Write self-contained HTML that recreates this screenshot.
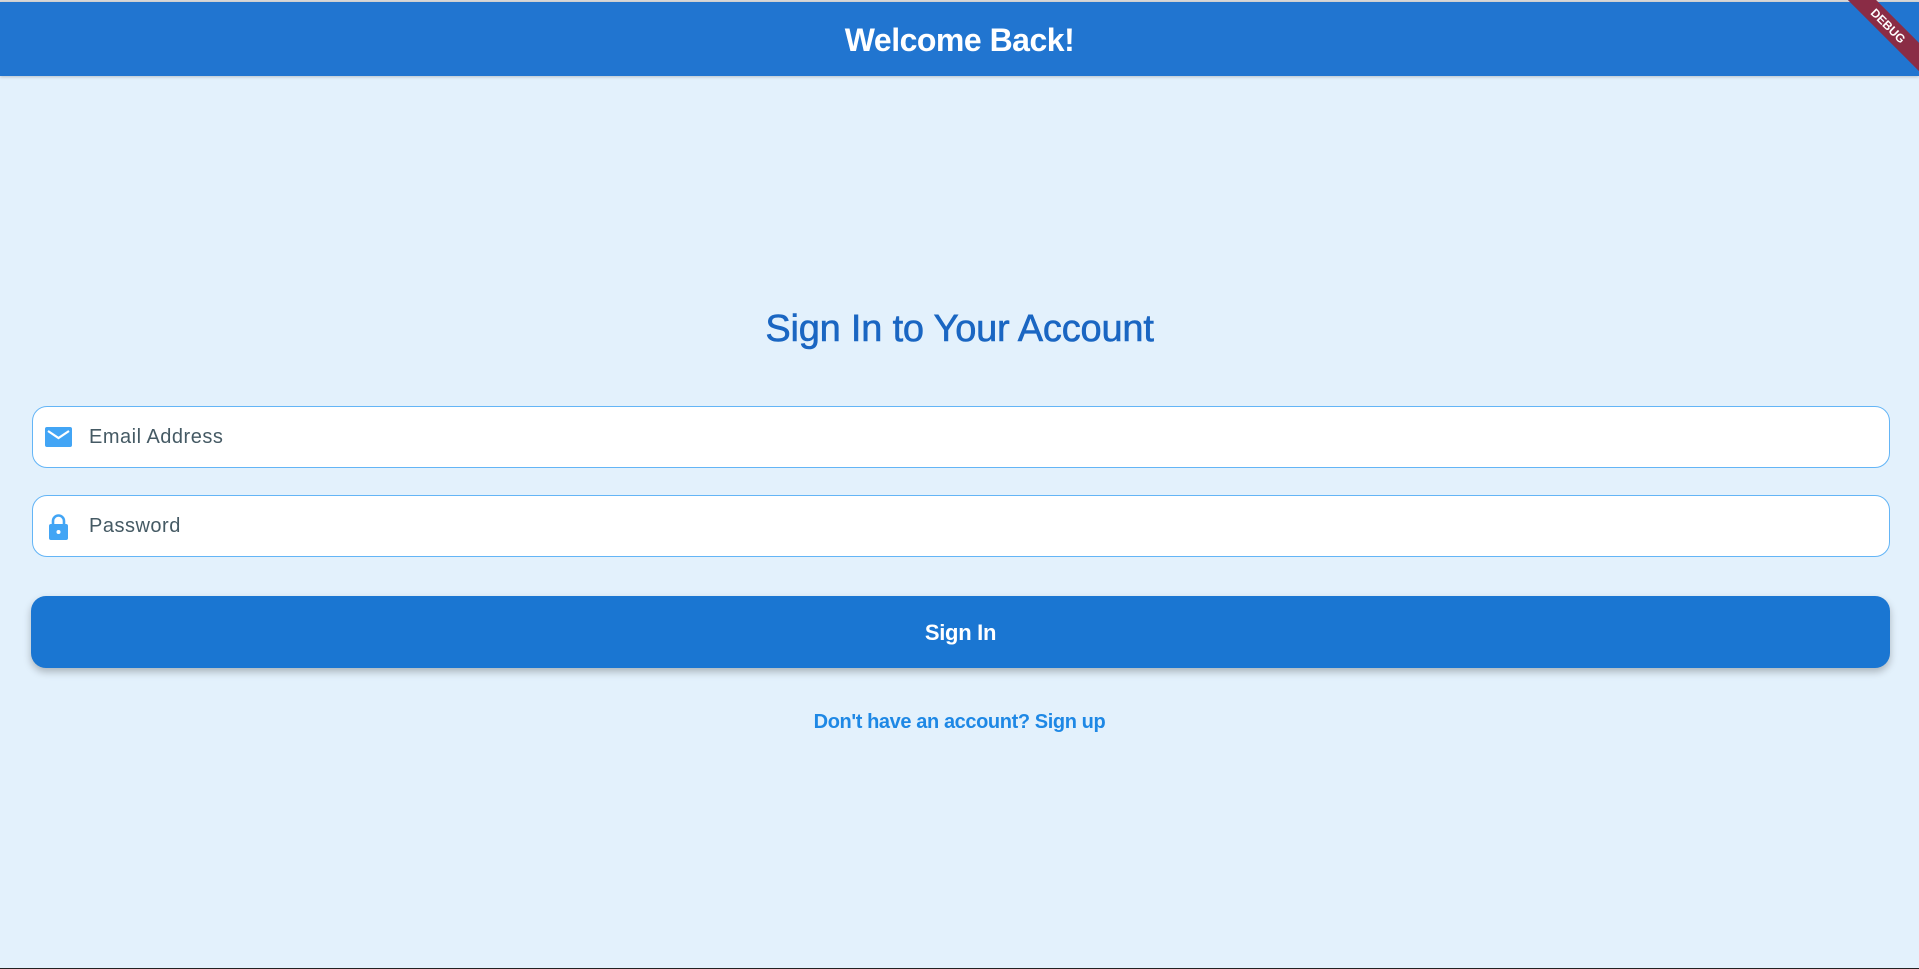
<!DOCTYPE html>
<html><head><meta charset="utf-8"><style>
*{margin:0;padding:0;box-sizing:border-box}
body{width:1919px;height:969px;background:#e3f1fc;font-family:"Liberation Sans",sans-serif;position:relative;overflow:hidden}
.top{position:absolute;left:0;top:0;width:1919px;height:2px;background:#d8d8d8}
.bar{position:absolute;left:0;top:2px;width:1919px;height:74px;background:#2175d0;box-shadow:0 1px 3px rgba(0,0,0,.2)}
.bar h1{color:#fff;font-size:32px;font-weight:bold;text-align:center;line-height:76px;letter-spacing:-0.5px}
.debug{position:absolute;top:16px;right:-34px;width:130px;height:20px;background:#8a2c45;color:#fff;font-size:12px;font-weight:bold;text-align:center;line-height:20px;transform:rotate(45deg);}
h2{position:absolute;top:308px;left:0;width:1919px;text-align:center;color:#1a66c2;font-size:38px;font-weight:normal;letter-spacing:-0.2px;-webkit-text-stroke:0.6px #1a66c2}
.field{position:absolute;left:32px;width:1858px;height:62px;background:#fff;border:1.5px solid #64b5f6;border-radius:15px}
.field span{position:absolute;left:56px;top:1px;line-height:59px;font-size:20px;color:#455a64;letter-spacing:0.5px}
.field svg{position:absolute;left:10px;top:16px}
.btn{position:absolute;left:31px;top:596px;width:1859px;height:72px;background:#1a76d2;border-radius:15px;box-shadow:0 4px 8px rgba(0,0,0,.25);color:#fff;font-weight:bold;font-size:22px;text-align:center;line-height:74px;letter-spacing:-0.3px}
.link{position:absolute;top:711px;left:0;width:1919px;text-align:center;color:#1e88e5;font-size:20px;font-weight:bold;letter-spacing:-0.4px}
.bot{position:absolute;left:0;top:968px;width:1919px;height:1px;background:#222}
</style></head><body>
<div class="top"></div>
<div class="bar"><h1>Welcome Back!</h1></div>
<div class="debug">DEBUG</div>
<h2>Sign In to Your Account</h2>
<div class="field" style="top:406px"><svg width="30" height="28" viewBox="0 0 30 28"><rect x="2" y="4" width="27" height="20" rx="2" fill="#42a5f5"/><path d="M5 8 L15.5 15 L26 8" stroke="#fff" stroke-width="2.2" fill="none"/></svg><span>Email Address</span></div>
<div class="field" style="top:495px"><svg width="30" height="30" viewBox="0 0 30 30"><path d="M10 13 V9 a5.5 5.5 0 0 1 11 0 V13" stroke="#42a5f5" stroke-width="2.6" fill="none"/><rect x="6" y="12" width="19" height="16" rx="2" fill="#42a5f5"/><circle cx="15.5" cy="20" r="2" fill="#fff"/></svg><span>Password</span></div>
<div class="btn">Sign In</div>
<div class="link">Don't have an account? Sign up</div>
<div class="bot"></div>
</body></html>
